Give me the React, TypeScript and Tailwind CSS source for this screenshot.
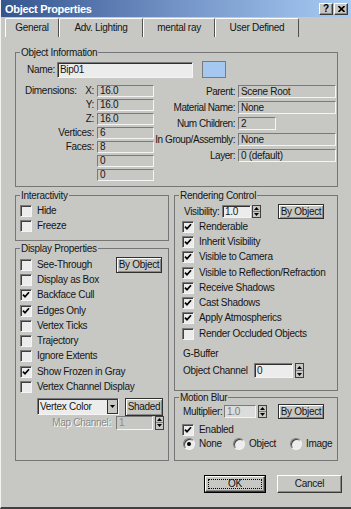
import React from 'react'

const sunken =
  'border-t border-l border-t-[#7a7a7a] border-l-[#7a7a7a] border-b border-r border-b-[#f4f4f4] border-r-[#f4f4f4]'
const raised =
  'border-t border-l border-t-[#ffffff] border-l-[#ffffff] border-b border-r border-b-[#3a3a3a] border-r-[#3a3a3a] shadow-[inset_-1px_-1px_0_#8a8a8a]'

const Field = ({ className = '', children }: { className?: string; children?: React.ReactNode }) => (
  <div className={`${sunken} flex items-center pl-[2px] overflow-hidden whitespace-nowrap ${className}`}>
    {children}
  </div>
)

const Spin = ({ className = 'h-[13px]' }: { className?: string }) => (
  <div className={`w-[9px] ${className} flex flex-col border border-[#404040] bg-[#c7c8c4]`}>
    <div className="flex-1 flex items-center justify-center border-b border-[#808080]">
      <svg width="5" height="3" viewBox="0 0 5 3">
        <path d="M0 3 L2.5 0 L5 3Z" fill="#000" />
      </svg>
    </div>
    <div className="flex-1 flex items-center justify-center">
      <svg width="5" height="3" viewBox="0 0 5 3">
        <path d="M0 0 L2.5 3 L5 0Z" fill="#000" />
      </svg>
    </div>
  </div>
)

const Check = ({ on = false, label }: { on?: boolean; label: string }) => (
  <div className="flex items-center h-[15.3px] gap-[5px]">
    <div
      className={`w-[12px] h-[12px] shrink-0 bg-[#ececec] ${sunken} shadow-[inset_1px_1px_0_#404040] flex items-center justify-center`}
    >
      {on && (
        <svg width="8" height="8" viewBox="0 0 8 8">
          <path d="M1 3.6 L3 5.8 L7 1.2" stroke="#000" strokeWidth="1.7" fill="none" />
        </svg>
      )}
    </div>
    <span className="whitespace-nowrap">{label}</span>
  </div>
)

const Radio = ({ on = false, label, className = '' }: { on?: boolean; label: string; className?: string }) => (
  <div className={`flex items-center gap-[4px] ${className}`}>
    <div
      className={`w-[12px] h-[12px] rounded-full bg-[#ececec] ${sunken} shadow-[inset_1px_1px_0_#404040] flex items-center justify-center`}
    >
      {on && <div className="w-[4px] h-[4px] rounded-full bg-black" />}
    </div>
    <span>{label}</span>
  </div>
)

const Btn = ({ className = '', children }: { className?: string; children: React.ReactNode }) => (
  <div
    className={`border border-[#303030] shadow-[inset_1px_1px_0_#ffffff,inset_-1px_-1px_0_#8a8a8a] flex items-center justify-center whitespace-nowrap ${className}`}
  >
    {children}
  </div>
)

const Group = ({ title, className = '', children }: { title: string; className?: string; children: React.ReactNode }) => (
  <fieldset className={`border border-[#767676] ${className}`}>
    <legend className="ml-[4px] px-[1px] leading-[13px]">{title}</legend>
    {children}
  </fieldset>
)

const LeftRow = ({ label, value, lead }: { label: string; value?: string; lead?: string }) => (
  <div className="flex items-center h-[12px] mb-[2px]">
    <div className="w-[81px] flex justify-between pl-[9px] pr-[3px] whitespace-nowrap">
      <span>{lead}</span>
      <span>{label}</span>
    </div>
    <Field className="w-[57px] h-[12px]">{value}</Field>
  </div>
)

const RightRow = ({ label, value, w = 'w-[98px]' }: { label: string; value: string; w?: string }) => (
  <div className="flex items-center h-[13px] mb-[3px]">
    <div className="w-[84px] flex justify-end pr-[3px] whitespace-nowrap">
      <span className="tracking-[-0.45px]">{label}</span>
    </div>
    <Field className={`${w} h-[13px]`}>{value}</Field>
  </div>
)

export default function App() {
  const tabs = [
    { t: 'General', w: 'w-[54px]' },
    { t: 'Adv. Lighting', w: 'w-[84px]' },
    { t: 'mental ray', w: 'w-[72px]' },
    { t: 'User Defined', w: 'w-[84px]' },
  ]
  return (
    <div className="w-[351px] h-[509px] bg-[#c7c8c4] border-l border-l-[#f2f2f2] border-b-2 border-b-[#404040] [font-family:'Liberation_Sans',Arial,sans-serif] text-[10px] tracking-[-0.3px] leading-[12px] text-[#151515] overflow-hidden">
      {/* title bar */}
      <div className="h-[17px] bg-linear-to-r from-[#35558f] via-[#7393c6] to-[#a8ccf4] flex items-center pl-[4px] pr-[3px]">
        <span className="text-white font-bold text-[11px]">Object Properties</span>
        <div className="ml-auto flex gap-[1px]">
          <div className={`w-[14px] h-[12px] bg-[#c7c8c4] ${raised} flex items-center justify-center font-bold text-[10px] text-black`}>
            ?
          </div>
          <div className={`w-[14px] h-[12px] bg-[#c7c8c4] ${raised} flex items-center justify-center`}>
            <svg width="7" height="6" viewBox="0 0 7 6">
              <path d="M0.5 0 L6.5 6 M6.5 0 L0.5 6" stroke="#000" strokeWidth="1.6" />
            </svg>
          </div>
        </div>
      </div>

      {/* tabs */}
      <div className="flex pl-[4px] mt-[1px] h-[19px]">
        {tabs.map((tab) => (
          <div
            key={tab.t}
            className={`${tab.w} h-[19px] border-t border-l border-[#ffffff] border-r border-r-[#505050] rounded-t-[2px] flex items-center justify-center whitespace-nowrap`}
          >
            {tab.t}
          </div>
        ))}
      </div>

      <div className="pl-[14px] pr-[13px] pt-[9px]">
        <Group title="Object Information" className="h-[141px]">
          <div className="flex items-center mt-[2px] pl-[11px]">
            <span className="w-[30px]">Name:</span>
            <Field className="w-[136px] h-[16px] bg-[#ececec] shadow-[inset_1px_1px_0_#303030]">Bip01</Field>
            <div className="ml-[9px] w-[24px] h-[17px] bg-[#a4c8f0] border border-[#7a7a7a]" />
          </div>
          <div className="flex mt-[7px]">
            <div className="w-[138px]">
              <LeftRow lead="Dimensions:" label="X:" value="16.0" />
              <LeftRow label="Y:" value="16.0" />
              <LeftRow label="Z:" value="16.0" />
              <LeftRow label="Vertices:" value="6" />
              <LeftRow label="Faces:" value="8" />
              <LeftRow label="" value="0" />
              <LeftRow label="" value="0" />
            </div>
            <div>
              <RightRow label="Parent:" value="Scene Root" />
              <RightRow label="Material Name:" value="None" />
              <RightRow label="Num Children:" value="2" w="w-[38px]" />
              <RightRow label="In Group/Assembly:" value="None" />
              <RightRow label="Layer:" value="0 (default)" />
            </div>
          </div>
        </Group>

        <div className="flex gap-[5px] mt-[2px]">
          {/* left column */}
          <div className="w-[154px]">
            <Group title="Interactivity" className="h-[52px]">
              <div className="pl-[4px] mt-[1px]">
                <Check label="Hide" />
                <Check label="Freeze" />
              </div>
            </Group>
            <Group title="Display Properties" className="h-[219px] mt-[1px]">
              <div className="pl-[4px] mt-[2px]">
                <div className="flex items-center">
                  <Check label="See-Through" />
                  <Btn className="ml-auto mr-[6px] w-[46px] h-[16px] -my-px">By Object</Btn>
                </div>
                <Check label="Display as Box" />
                <Check on label="Backface Cull" />
                <Check on label="Edges Only" />
                <Check label="Vertex Ticks" />
                <Check label="Trajectory" />
                <Check label="Ignore Extents" />
                <Check on label="Show Frozen in Gray" />
                <Check label="Vertex Channel Display" />
              </div>
              <div className="flex items-center mt-[3px] pl-[21px]">
                <div className={`w-[82px] h-[17px] bg-[#ececec] ${sunken} shadow-[inset_1px_1px_0_#303030] flex items-center`}>
                  <span className="pl-[2px] flex-1">Vertex Color</span>
                  <div className="w-[11px] h-full border border-[#303030] bg-[#c7c8c4] flex items-center justify-center">
                    <svg width="5" height="3" viewBox="0 0 5 3">
                      <path d="M0 0 L2.5 3 L5 0Z" fill="#000" />
                    </svg>
                  </div>
                </div>
                <Btn className="ml-[6px] w-[38px] h-[18px]">Shaded</Btn>
              </div>
              <div className="flex items-center h-[14px] text-[#8a8a8a]">
                <div className="w-[100px] text-right pr-[5px] [text-shadow:1px_1px_0_#fff]">Map Channel:</div>
                <Field className="w-[37px] h-[14px]">1</Field>
                <div className="ml-[2px]">
                  <Spin className="h-[14px]" />
                </div>
              </div>
            </Group>
          </div>

          {/* right column */}
          <div className="w-[164px]">
            <Group title="Rendering Control" className="h-[202px]">
              <div className="flex items-center h-[15px] mt-[2px] pl-[9px]">
                <span className="w-[38px]">Visibility:</span>
                <Field className="w-[29px] h-[13px] bg-[#ececec] shadow-[inset_1px_1px_0_#303030]">1.0</Field>
                <div className="ml-[1px]">
                  <Spin />
                </div>
                <Btn className="ml-auto mr-[13px] w-[46px] h-[15px]">By Object</Btn>
              </div>
              <div className="pl-[7px]">
                <Check on label="Renderable" />
                <Check on label="Inherit Visibility" />
                <Check on label="Visible to Camera" />
                <Check on label="Visible to Reflection/Refraction" />
                <Check on label="Receive Shadows" />
                <Check on label="Cast Shadows" />
                <Check on label="Apply Atmospherics" />
                <Check label="Render Occluded Objects" />
              </div>
              <div className="pl-[8px] mt-[7px]">G-Buffer</div>
              <div className="flex items-center h-[15px] mt-[3px] pl-[8px]">
                <span className="w-[71px]">Object Channel</span>
                <Field className="w-[39px] h-[15px] bg-[#ececec] shadow-[inset_1px_1px_0_#303030]">0</Field>
                <div className="ml-[2px]">
                  <Spin className="h-[15px]" />
                </div>
              </div>
            </Group>
            <Group title="Motion Blur" className="h-[70px]">
              <div className="flex items-center h-[15px] pl-[8px]">
                <span className="w-[41px]">Multiplier:</span>
                <Field className="w-[32px] h-[13px] bg-[#dcdcdc] text-[#7a7a7a]">1.0</Field>
                <div className="ml-[2px]">
                  <Spin />
                </div>
                <Btn className="ml-auto mr-[13px] w-[46px] h-[15px]">By Object</Btn>
              </div>
              <div className="pl-[7px] mt-[4px] h-[14px] flex items-center">
                <Check on label="Enabled" />
              </div>
              <div className="flex items-center h-[14px] pl-[8px]">
                <Radio on label="None" className="w-[50px]" />
                <Radio label="Object" className="w-[57px]" />
                <Radio label="Image" />
              </div>
            </Group>
          </div>
        </div>
      </div>

      {/* buttons */}
      <div className="flex justify-end gap-[11px] pr-[9px] mt-[14px]">
        <div className="w-[62px] h-[18px] border border-black">
          <div className={`h-full ${raised} p-[2px]`}>
            <div className="h-full border border-dotted border-black flex items-center justify-center">OK</div>
          </div>
        </div>
        <div className={`w-[65px] h-[18px] ${raised} flex items-center justify-center`}>Cancel</div>
      </div>
    </div>
  )
}
